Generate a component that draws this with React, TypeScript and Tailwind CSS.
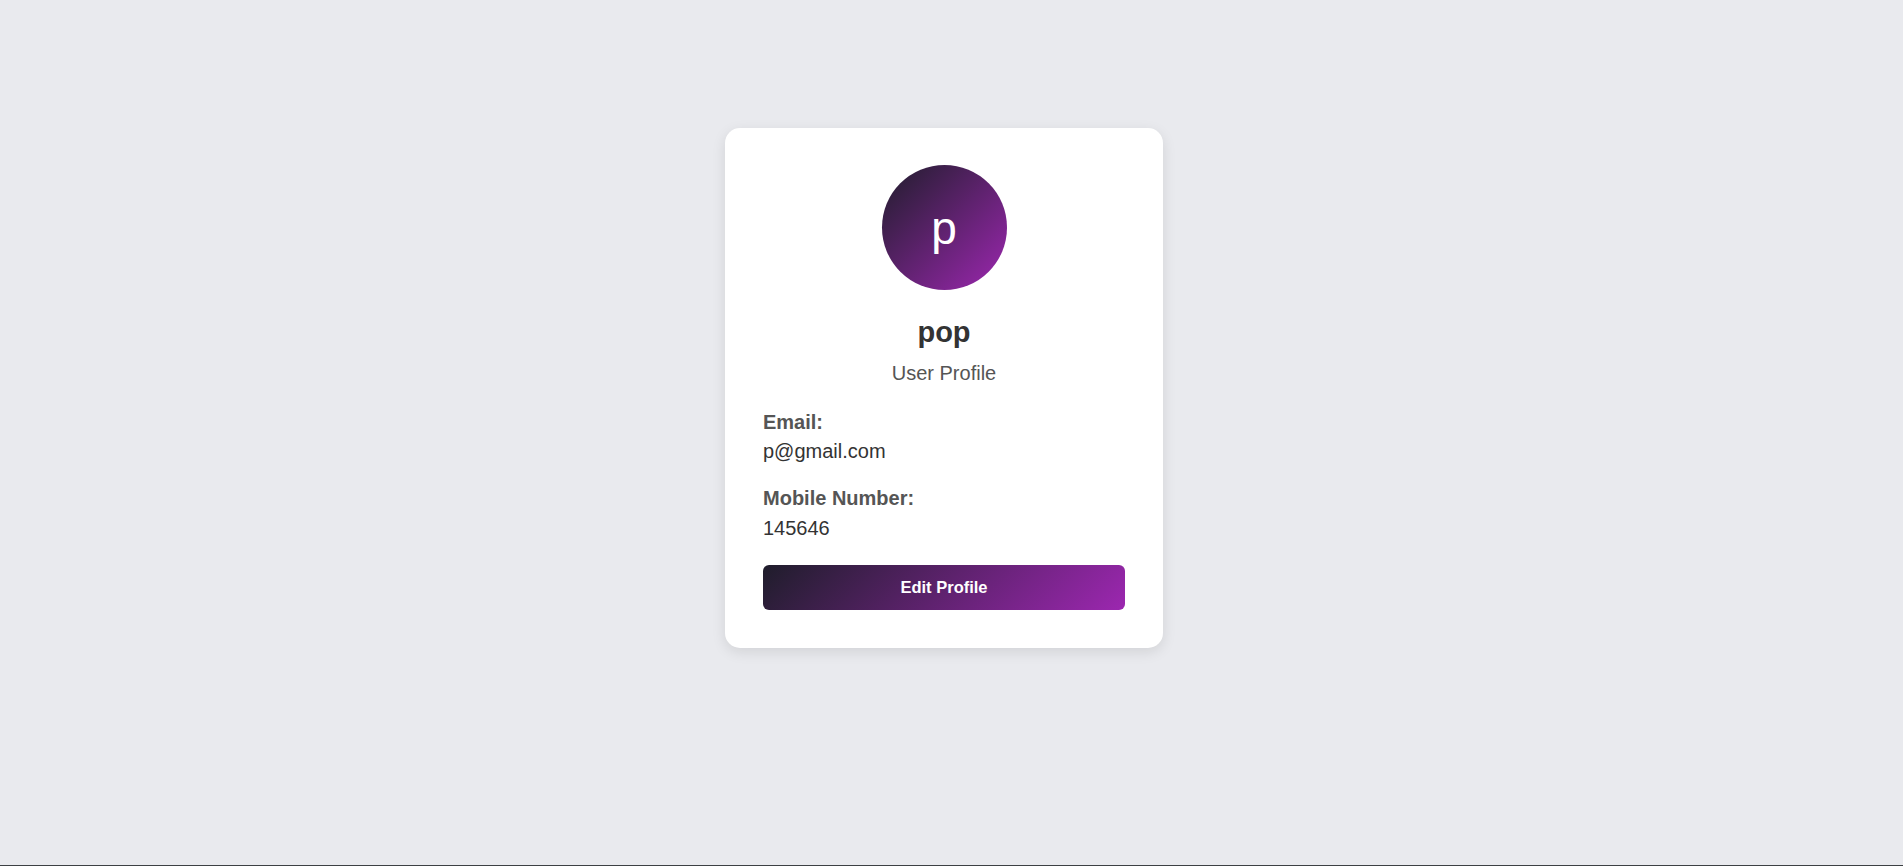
export default function App() {
  const user = { name: "pop", email: "p@gmail.com", mobile: "145646" };

  return (
    <div className="flex h-[866px] justify-center border-b border-[#3c4043] bg-[#e9eaee] pt-[128px] pr-[15px] font-['Liberation_Sans',Arial,sans-serif]">
      <div className="flex h-fit w-[438px] flex-col rounded-[15px] bg-white px-[38px] pt-[37px] pb-[38px] shadow-[0_4px_14px_rgba(0,0,0,0.1)]">
        <div className="mx-auto flex size-[125px] items-center justify-center rounded-full bg-[linear-gradient(135deg,#1f1d2b,#9c27b0)] text-[46px] leading-[46px] text-white">
          {user.name.charAt(0)}
        </div>

        <h2 className="mt-[24px] text-center text-[29px] leading-[36px] font-bold text-[#333]">{user.name}</h2>
        <p className="mt-[9px] text-center text-[20px] leading-[28px] text-[#555]">User Profile</p>

        <div className="mt-[20px] flex flex-col text-[20px] leading-[30px]">
          <span className="font-bold text-[#555]">Email:</span>
          <span className="-mt-[1px] text-[#333]">{user.email}</span>
        </div>

        <div className="mt-[17px] flex flex-col text-[20px] leading-[30px]">
          <span className="font-bold text-[#555]">Mobile Number:</span>
          <span className="text-[#333]">{user.mobile}</span>
        </div>

        <button className="mt-[22px] h-[45px] w-full rounded-[6px] bg-[linear-gradient(135deg,#1f1d2b,#9c27b0)] text-[16.5px] font-bold text-white">
          Edit Profile
        </button>
      </div>
    </div>
  );
}
